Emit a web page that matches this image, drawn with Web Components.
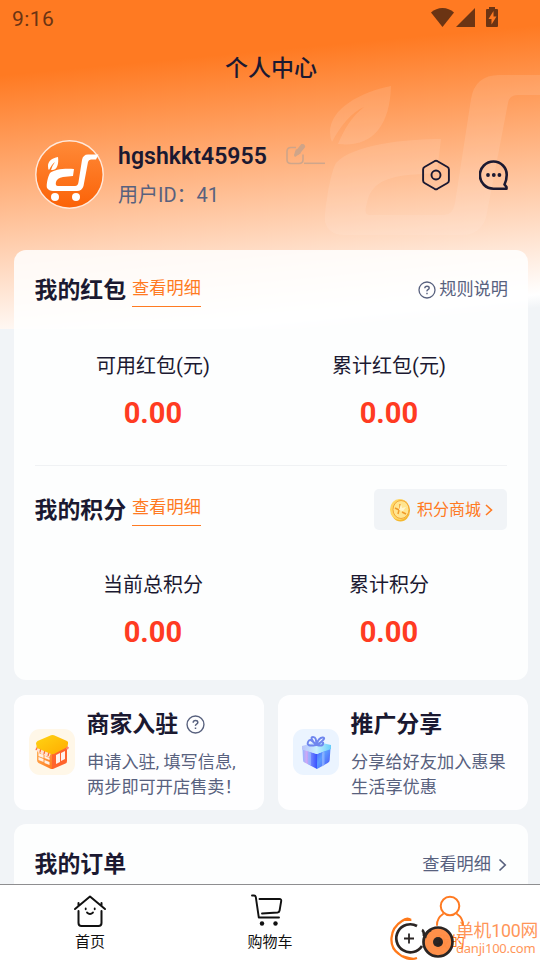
<!DOCTYPE html>
<html lang="zh-CN">
<head>
<meta charset="utf-8">
<title>个人中心</title>
<style>
html,body{margin:0;height:100%;overflow:hidden}
body{font-family:Roboto,"Noto Sans CJK SC",sans-serif;color:#1b1931}
</style>
</head>
<body>
<profile-page></profile-page>
<script>
const define = (name, html) => customElements.define(name, class extends HTMLElement {
  constructor() {
    super();
    const t = document.createElement('template');
    t.innerHTML = html.replace(/\{(\w+)\}/g, (_, k) => this.getAttribute(k) || '');
    this.attachShadow({mode: 'open'}).append(t.content.cloneNode(true));
  }
});

define('status-bar', `
<style>:host{display:flex;height:36px;align-items:center;justify-content:space-between;padding:0 41px 0 12px;color:#6b3413;font-size:21px;letter-spacing:.4px;box-sizing:border-box}
span{line-height:24px;padding-top:2px}svg{display:block}</style>
<span>9:16</span>
<svg width="68" height="36" viewBox="431 0 68 36" fill="#6b3413"><path d="M442.500 27L431 12.500Q436 8 442.500 8T454 12.500Z"/><path d="M456 27L475 8V27Z"/><path fill-rule="evenodd" d="M489 7h6v2h2q1 0 1 1v16q0 1-1 1h-10q-1 0-1-1V10q0-1 1-1h2ZM493.500 11l-5 8h3v5.500l5-8h-3Z"/></svg>`);

define('leaf-cart', `
<style>:host{display:block}svg{display:block;width:100%;height:100%;overflow:visible}</style>
<svg viewBox="323 70 230 180" fill="currentColor"><path d="M391 86C360 92 330 109 330 132Q330 138 332 142C341 125 352 112 364 107C351 117 344 130 338 144C370 148 390 128 391 86Z"/><path fill-rule="evenodd" d="M441 139C403 139 352 145 336 163C330 173 324 213 325 222Q329 235 344 235H462Q480 235 486 218L508 103Q509 95 518 95H556V75H499Q475 75 471 99L455 203Q453 215 444 215H370Q363 215 367 203C371 184 384 178 408 175L437 173Z"/></svg>`);

define('user-header', `
<style>
:host{display:block}
h1{margin:0;height:63px;line-height:65px;text-align:center;font-size:23px;font-weight:500;padding-left:2px}
.row{display:flex;height:151px;align-items:center;padding:0 31px 0 35px;box-sizing:border-box}
.avatar{width:69px;height:69px;flex:none}
.avatar svg{display:block}
.who{margin-left:14px;flex:1}
.name{display:flex;height:31px;align-items:center;line-height:31px;font-size:23px;font-weight:600;letter-spacing:.05px}
.name svg{margin-left:18px;margin-top:-4px}
.id{font-size:20px;line-height:28px;margin-top:9px;color:#58617e}
.acts{display:flex;gap:28px;align-items:center}
svg{display:block}
</style>
<h1>个人中心</h1>
<div class="row">
 <div class="avatar"><svg width="69" height="69" viewBox="0 0 69 69"><defs><linearGradient id="g" x2="0" y2="1"><stop stop-color="#ff8a38"/><stop offset="1" stop-color="#fb6207"/></linearGradient></defs><circle cx="34.500" cy="34.500" r="33.700" fill="url(#g)" stroke="#ffe9dc" stroke-width="1.400"/>
 <g fill="#fff"><path d="M23 17C17 18 13 21 13 26Q13 29 14 30Q17 24 20 22Q17 26 16 30C22 31 24 24 23 17Z"/><path fill-rule="evenodd" d="M39 29C31 28 19 29 15 33C13 36 11 45 12 48Q14 51 18 51H42Q47 51 48.500 46L53 22Q53.500 19.500 56 19.500H61L63.500 14.500H53Q48 14.500 47 20L43.500 42Q43 46 40 46H23Q20 46 21 42Q22 38 28 37L38 36Z"/><circle cx="20" cy="57" r="4"/><circle cx="41" cy="57" r="4"/></g></svg></div>
 <div class="who"><div class="name"><span>hgshkkt45955</span>
  <svg width="40" height="26" viewBox="285 141 40 26" fill="none" stroke="#bfa28f" style="opacity:.75"><path stroke-width="1.600" d="M296 147.500h-5q-4 0-4 4v8q0 4 4 4h8q4 0 4-4v-5"/><path stroke-width="5" stroke-linecap="round" d="M302.500 146.500L298 152"/><path fill="#bfa28f" stroke="none" d="M296 149l5 4-6 4q-1-1-1-2Z"/><path stroke-width="1.500" d="M304 163.300h21"/></svg></div>
  <div class="id">用户ID：41</div></div>
 <div class="acts">
  <svg width="30" height="32" viewBox="420.500 159 30 32" fill="none" stroke="#1b1931" stroke-width="1.900" stroke-linejoin="round"><path d="M434 161.200q1.500-.8 3 0l10 5.800q1.400.8 1.400 2.400v11.200q0 1.600-1.400 2.400l-10 5.800q-1.500.8-3 0l-10-5.800q-1.400-.8-1.400-2.400v-11.200q0-1.600 1.400-2.400Z"/><circle cx="435.500" cy="175" r="4.500"/></svg>
  <svg width="30" height="32" viewBox="479 159 30 32" fill="none" stroke="#1b1931" stroke-width="2.600" stroke-linejoin="round"><path d="M493.500 161.500a13.200 13.200 0 1 0 0 27.200H506.500V187L504.500 184.500Q506.700 180 506.700 175A13.200 13.200 0 0 0 493.500 161.500Z"/><g fill="#1b1931" stroke="none"><circle cx="488" cy="175" r="1.900"/><circle cx="493.800" cy="175" r="1.900"/><circle cx="499.400" cy="175" r="1.900"/></g></svg>
 </div>
</div>`);

define('panel-card', `
<style>:host{display:block;background:rgba(255,255,255,.85);border-radius:12px;box-sizing:border-box}</style><slot></slot>`);

define('section-title', `
<style>:host{display:flex;align-items:center;height:41px}
b{font-size:22.900px;font-weight:700;line-height:44px;height:41px;margin-left:-.5px}
.link{margin-left:6px;font-size:17.200px;line-height:24px;color:#ff7a22}
.link:not(:empty){border-bottom:1px solid #ff7a22;padding:0 0 6px;margin-top:var(--link-top,4px);height:24px;width:69px;white-space:nowrap}
.r{margin-left:auto}</style>
<b>{label}</b><span class="link">{link}</span><div class="r"><slot></slot></div>`);

define('help-mark', `
<style>:host{display:block}svg{display:block}</style>
<svg width="{size}" height="{size}" viewBox="0 0 18 18" fill="none" stroke="#58617e" stroke-width="1.300"><circle cx="9" cy="9" r="8"/><path stroke-width="1.400" d="M6.800 7.300Q6.900 5.300 9 5.300T11.200 7Q11.200 7.900 10 8.600T9 10.400M9 11.800v1.500"/></svg>`);

define('rule-link', `
<style>:host{display:flex;align-items:center;gap:3px;font-size:17.200px;line-height:24px;color:#58617e;margin-top:-2px;margin-right:-1px}help-mark{margin-top:3px}</style>
<help-mark size="18"></help-mark><span>规则说明</span>`);

define('mall-button', `
<style>:host{display:flex;align-items:center;width:133px;height:41px;background:#f1f4f7;border-radius:5px;padding-left:15px;box-sizing:border-box;color:#ff7a22;font-size:16px;line-height:24px}
span{margin:1px 4px 0 6px;white-space:nowrap}svg{display:block;flex:none}</style>
<svg width="22" height="24" viewBox="0 0 22 24"><ellipse cx="11.500" cy="12.500" rx="9.500" ry="11" fill="#f5b82f"/><ellipse cx="10.500" cy="11.500" rx="9.500" ry="10.500" fill="#ffd766"/><ellipse cx="12" cy="11.500" rx="8" ry="9" fill="#ffe590" stroke="#f3a838"/><path d="M6 10l4 2-1 4M11 6v5M13 14l4 2" fill="none" stroke="#f19a28" stroke-width="1.500"/><path d="M12 6l1 4 4-1-3 4-4-1Z" fill="#fff6cf"/></svg>
<span>积分商城</span><svg width="8" height="14" viewBox="0 0 8 14" fill="none" stroke="#ff7a22" stroke-width="1.600" style="margin-top:1px"><path d="M1 2l5.500 5L1 12"/></svg>`);

define('stat-item', `
<style>:host{display:block;text-align:center}
p{margin:0;font-size:20px;line-height:30px;height:30px}
strong{display:block;font-size:29px;font-weight:700;line-height:36px;color:#ff3b22;margin-top:14px;letter-spacing:.1px}</style>
<p>{label}</p><strong>0.00</strong>`);

define('wallet-panel', `
<style>panel-card{height:430px;padding:19px 21px 0}
.stats{display:grid;grid-template-columns:1fr 1fr;padding-top:41px;height:115px;box-sizing:border-box}
.low{padding-top:40px}
.second{--link-top:2px}
hr{border:0;border-top:1px solid #f0f2f4;margin:40px 0 23px}</style>
<panel-card>
<section-title label="我的红包" link="查看明细"><rule-link></rule-link></section-title>
<div class="stats"><stat-item label="可用红包(元)"></stat-item><stat-item label="累计红包(元)"></stat-item></div>
<hr>
<section-title class="second" label="我的积分" link="查看明细"><mall-button></mall-button></section-title>
<div class="stats low"><stat-item label="当前总积分"></stat-item><stat-item label="累计积分"></stat-item></div>
</panel-card>`);

define('promo-card', `
<style>:host{display:block}
panel-card{height:115px;background:#fefeff;display:flex;padding:13px 0 0 15px}
.icon{margin-top:21px;width:46px;height:46px;flex:none}
.t{margin-left:12px}
.h{display:flex;align-items:center;gap:8px;font-size:22.900px;font-weight:700;line-height:33px;height:32px;margin-left:-.5px}
p{margin:10px 0 0;font-size:17.200px;line-height:25px;color:#58617e;white-space:pre-line}</style>
<panel-card><div class="icon"><slot name="icon"></slot></div><div class="t"><div class="h"><span>{label}</span><slot name="mark"></slot></div><p><slot></slot></p></div></panel-card>`);

define('shop-icon', `
<style>:host,svg{display:block}</style>
<svg width="46" height="46" viewBox="0 0 46 46"><defs><linearGradient id="a" x2="1" y2="1"><stop stop-color="#ffd414"/><stop offset="1" stop-color="#ffab00"/></linearGradient><linearGradient id="b" x2="1" y2="1"><stop stop-color="#ffb35c"/><stop offset="1" stop-color="#ff7a1e"/></linearGradient></defs>
<rect width="46" height="46" rx="11" fill="#fff7e8"/><path d="M8 18l15 7v15q-1 0-2-.500L9.500 34Q8 33 8 31Z" fill="url(#b)"/><path d="M23 24l15-7v15q0 2-1.500 2.500L25 39.500Q24 40 23 40Z" fill="#ff642d"/><path d="M7 17l15 7-2 5-2-2-1.500 1-2-3-1.500 1-2-3-1.500 1-2-3-1.500 1Z" fill="#ffe3d1"/><path d="M9 17l-2 4M12 19l-1 4M16 21l-1 4M20 23l-1 4" stroke="#ff703e" stroke-width="1.300"/><path d="M22 6.300q1.500-.6 3 0L38 12q1.500.8 1 2.500L38.500 18 25 25q-1.500.6-3 0L8 19 7 14.500Q7 13 8.500 12Z" fill="url(#a)"/><path d="M9.500 24l5 2v3l-5-2ZM9.500 28l5 2v3l-5-2ZM15.500 27l5 2v2l-5-2ZM15.500 31l5 2v3l-5-2Z" fill="#fff0e6"/><path d="M27 26l4-2v9l-4 2ZM32 24l4-2v8l-4 2Z" fill="#fff1ed"/><path d="M38 17l2 1.500-1 2-2-.500Z" fill="#ff8574"/></svg>`);

define('gift-icon', `
<style>:host,svg{display:block}</style>
<svg width="46" height="46" viewBox="0 0 46 46"><defs><linearGradient id="a" x2="1"><stop stop-color="#94b5ff"/><stop offset=".3" stop-color="#d0a8f4"/><stop offset=".6" stop-color="#6d83ff"/><stop offset="1" stop-color="#3751ff"/></linearGradient><linearGradient id="b" x2="1" y2="1"><stop stop-color="#4a60ff"/><stop offset=".4" stop-color="#5b9dff"/><stop offset="1" stop-color="#4a4cf6"/></linearGradient><linearGradient id="c" x2="1"><stop stop-color="#b9c1fa"/><stop offset=".5" stop-color="#c9f0ff"/><stop offset="1" stop-color="#66cdf9"/></linearGradient></defs>
<rect width="46" height="46" rx="11" fill="#ebf4ff"/><path d="M9.500 20L24 25v15L11.500 33.500Q10 33 10 31Z" fill="url(#a)"/><path d="M24 25l13.500-6-.8 12q0 2-2 3L24 40Z" fill="url(#b)"/><path d="M9 17l14-4q1-.4 2 0l13 3v4L25 24.500q-1.500.5-3 0L9 20.500Z" fill="url(#c)"/><path d="M15 22.500l3 1v13L15 35ZM29 23.500l2.500-1V36l-2.500 1.500Z" fill="#98b9ff" opacity=".7"/><path d="M23 16Q13 18 15 13T23 16Q16 8 20 8t3 8Q26 8 30 8.500T24 16Q31 18 30 13" fill="none" stroke="#6f86ee" stroke-width="2"/></svg>`);

define('orders-panel', `
<style>panel-card{height:75px;padding:19px 21px 0}
.more{display:flex;align-items:center;gap:7px;color:#58617e;font-size:17.200px;line-height:24px}svg{display:block;margin-top:2px}</style>
<panel-card><section-title label="我的订单"><div class="more"><span>查看明细</span><svg width="9" height="14" viewBox="0 0 9 14" fill="none" stroke="#58617e" stroke-width="1.700"><path d="M1.500 1.500L7.200 7 1.500 12.500"/></svg></div></section-title></panel-card>`);

define('tab-item', `
<style>:host{display:flex;flex-direction:column;align-items:center;color:#101010;font-size:15px;line-height:22px}</style>
<slot></slot><span>{label}</span>`);

define('tab-bar', `
<style>:host{display:grid;grid-template-columns:repeat(3,1fr);height:76px;background:#fff;border-top:1px solid #8e8e90;box-sizing:border-box;padding-top:9px;position:relative}
svg{display:block;margin-bottom:3px}.me{color:#ff7a22}</style>
<tab-item label="首页"><svg width="34" height="34" viewBox="73 894 34 34" fill="none" stroke="#111" stroke-width="2" stroke-linecap="round" stroke-linejoin="round"><path d="M75 909L90 896.500 105 909M78.500 911v12q0 3 3 3h17q3 0 3-3v-12M78.500 906v-3M101.500 906v-3"/><path stroke-width="1.800" d="M87 912.500q3 3 6 0M85.700 908.300v1M94.700 908.300v1"/></svg></tab-item>
<tab-item label="购物车"><svg width="34" height="34" viewBox="253 894 34 34" fill="none" stroke="#111" stroke-width="1.900" stroke-linecap="round" stroke-linejoin="round" style="overflow:visible"><path d="M252 895.500h2q1.500 0 1.800 1.500l3 20.500H279M259.500 899h20q2 0 1.700 2l-1.600 9.500q-.3 1.800-2 2L262 913.500"/><g fill="#111" stroke="none"><circle cx="262" cy="923.500" r="2.200"/><circle cx="275.500" cy="923.500" r="2.200"/></g></svg></tab-item>
<tab-item class="me" label="我的"><svg width="34" height="34" viewBox="433 894 34 34" fill="none" stroke="#ff7a22" stroke-width="2" stroke-linecap="round"><circle cx="450" cy="906" r="9.300"/><path d="M443 914Q437 918 437 925M457 914Q463 918 463 925"/></svg></tab-item>`);

define('site-mark', `
<style>:host{display:flex;width:150px;height:44px;color:#ff7f35;opacity:.96}
svg{display:block;flex:none}.t{margin-left:1px;white-space:nowrap;opacity:.85}
b{display:block;font-weight:400;font-size:17.800px;line-height:22px;margin-top:4px;letter-spacing:-.2px}i{display:block;font:13px/17px "Noto Sans","Noto Sans CJK SC",sans-serif;letter-spacing:-.22px;margin-top:-2px}</style>
<svg width="65" height="44" viewBox="390 916 65 44" fill="none"><path d="M411 920Q407 917 402 921C389 929 388 947 399 954Q407 961 417 958" stroke="#ff7411" stroke-width="2.300"/><path fill="#ff7411" d="M402 921Q408 916 412 921ZM402 955L417 959Q410 961 405 958Z"/><path d="M417 926A14 14 0 1 0 422 946M422 930q2 1 2 6" stroke="#231d1c" stroke-width="2.700"/><path d="M404 938.500h10M409 933.500v10" stroke="#231d1c" stroke-width="1.800"/><circle cx="438" cy="942" r="14.500" fill="#ff8c43" stroke="#231d1c" stroke-width="2.700"/><path d="M425 938q1-6 6-8" stroke="#231d1c" stroke-width="2.500"/><circle cx="438" cy="942" r="5" fill="#231d1c"/></svg>
<div class="t"><b>单机100网</b><i>danji100.com</i></div>`);

define('profile-page', `
<style>
:host{display:flex;flex-direction:column;height:960px;width:540px;overflow:hidden;position:relative;
background:linear-gradient(174.700deg,#ff7a22 75px,#fff 343px,#f1f4f7 356px) 0 0/540px 329px no-repeat,#f1f4f7}
.ghost{position:absolute;left:323px;top:70px;width:230px;height:180px;color:rgba(255,240,230,.13)}
user-header{position:relative}
main{flex:1;min-height:0;overflow:hidden;padding:0 12px 0 14px;display:flex;flex-direction:column;position:relative}
main>*{flex:none}
.pair{display:grid;grid-template-columns:1fr 1fr;gap:14px;margin:15px 0 14px}
site-mark{position:absolute;left:390px;top:916px}
status-bar{flex:none}tab-bar{flex:none}
</style>
<leaf-cart class="ghost"></leaf-cart>
<status-bar></status-bar>
<user-header></user-header>
<main>
<wallet-panel></wallet-panel>
<div class="pair">
<promo-card label="商家入驻"><shop-icon slot="icon"></shop-icon><help-mark slot="mark" size="19"></help-mark>申请入驻, 填写信息,<br>两步即可开店售卖！</promo-card>
<promo-card label="推广分享"><gift-icon slot="icon"></gift-icon>分享给好友加入惠果<br>生活享优惠</promo-card>
</div>
<orders-panel></orders-panel>
</main>
<tab-bar></tab-bar>
<site-mark></site-mark>`);
</script>
</body>
</html>
